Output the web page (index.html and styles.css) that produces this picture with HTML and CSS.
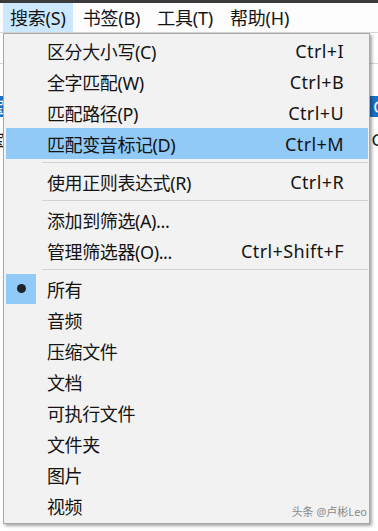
FILE: index.html
```html
<!DOCTYPE html>
<html lang="zh-CN">
<head>
    <meta charset="UTF-8">
    <title>搜索菜单</title>
    <link rel="stylesheet" href="styles.css">
</head>
<body>
    <div class="window">
        <div class="titlebar"></div>

        <nav class="menubar">
            <span class="menubar-item active">搜索(S)</span>
            <span class="menubar-item">书签(B)</span>
            <span class="menubar-item">工具(T)</span>
            <span class="menubar-item">帮助(H)</span>
        </nav>

        <!-- window content behind the open menu -->
        <div class="content">
            <div class="toolbar"></div>
            <div class="list-head"></div>
            <div class="list-row selected"><span class="cell-left">宝</span><span class="cell-right">C</span></div>
            <div class="list-row"><span class="cell-left">宝</span><span class="cell-right">G</span></div>
        </div>

        <div class="dropdown">
            <div class="menu-item"><span class="icon"></span><span class="label">区分大小写(C)</span><span class="key">Ctrl+I</span></div>
            <div class="menu-item"><span class="icon"></span><span class="label">全字匹配(W)</span><span class="key">Ctrl+B</span></div>
            <div class="menu-item"><span class="icon"></span><span class="label">匹配路径(P)</span><span class="key">Ctrl+U</span></div>
            <div class="menu-item hover"><span class="icon"></span><span class="label">匹配变音标记(D)</span><span class="key">Ctrl+M</span></div>
            <div class="separator"></div>
            <div class="menu-item"><span class="icon"></span><span class="label">使用正则表达式(R)</span><span class="key">Ctrl+R</span></div>
            <div class="separator"></div>
            <div class="menu-item"><span class="icon"></span><span class="label">添加到筛选(A)...</span><span class="key"></span></div>
            <div class="menu-item"><span class="icon"></span><span class="label">管理筛选器(O)...</span><span class="key">Ctrl+Shift+F</span></div>
            <div class="separator"></div>
            <div class="menu-item checked"><span class="icon"><span class="dot"></span></span><span class="label">所有</span><span class="key"></span></div>
            <div class="menu-item"><span class="icon"></span><span class="label">音频</span><span class="key"></span></div>
            <div class="menu-item"><span class="icon"></span><span class="label">压缩文件</span><span class="key"></span></div>
            <div class="menu-item"><span class="icon"></span><span class="label">文档</span><span class="key"></span></div>
            <div class="menu-item"><span class="icon"></span><span class="label">可执行文件</span><span class="key"></span></div>
            <div class="menu-item"><span class="icon"></span><span class="label">文件夹</span><span class="key"></span></div>
            <div class="menu-item"><span class="icon"></span><span class="label">图片</span><span class="key"></span></div>
            <div class="menu-item"><span class="icon"></span><span class="label">视频</span><span class="key"></span></div>

            <div class="watermark">头条 @卢彬Leo</div>
        </div>
    </div>
</body>
</html>
```

FILE: styles.css
```css
:root {
    --menu-bg: #f2f2f2;
    --menu-border: #a8a8a8;
    --hover: #91c9f7;
    --bar-hover: #cce8ff;
    --text: #141414;
    --line: #d7d7d7;
}

* {
    box-sizing: border-box;
    margin: 0;
    padding: 0;
}

body {
    width: 378px;
    height: 531px;
    overflow: hidden;
    background: #fff;
    font-family: "Noto Sans", "Noto Sans CJK SC", sans-serif;
    color: var(--text);
}

.window {
    position: relative;
    height: 100%;
}

.titlebar {
    height: 3px;
    background: #3b3b3b;
}

.menubar {
    display: flex;
    height: 30px;
    padding-left: 3px;
    background: #fdfdfd;
    border-bottom: 1px solid var(--line);
    font-size: 18px;
}

.menubar-item {
    display: flex;
    align-items: center;
    padding: 0 7px;
    margin-right: 3px;
    line-height: 30px;
    letter-spacing: -0.2px;
}

.menubar-item.active {
    background: var(--bar-hover);
}

/* background window content */
.content {
    font-size: 17px;
}

.toolbar {
    height: 31px;
    border-bottom: 1px solid var(--line);
}

.list-head {
    height: 32px;
}

.list-row {
    display: flex;
    justify-content: space-between;
    height: 21px;
    line-height: 21px;
    margin-bottom: 12px;
}

.list-row.selected {
    background: #1d6fc4;
    color: #fff;
}

.cell-left {
    margin-left: -12px;
}

.cell-right {
    margin-right: -6px;
}

/* the open dropdown menu */
.dropdown {
    position: absolute;
    top: 33px;
    left: 3px;
    width: 367px;
    height: 491px;
    padding: 1px 1px 0 1px;
    background: var(--menu-bg);
    border: 1px solid var(--menu-border);
    box-shadow: 2px 2px 3px rgba(0, 0, 0, 0.35);
    font-size: 18px;
}

.menu-item {
    display: flex;
    align-items: center;
    height: 31px;
    margin-left: 1px;
    padding-right: 24px;
    white-space: nowrap;
}

.menu-item.hover {
    background: var(--hover);
}

.icon {
    flex: none;
    width: 30px;
    height: 30px;
    margin-right: 11px;
    display: flex;
    align-items: center;
    justify-content: center;
}

.menu-item.checked .icon {
    background: var(--hover);
}

.dot {
    width: 9px;
    height: 9px;
    border-radius: 50%;
    background: #1e2328;
}

.label {
    flex: 1;
    letter-spacing: -0.4px;
}

.key {
    letter-spacing: 0.4px;
}

.separator {
    height: 7px;
    margin-left: 37px;
    display: flex;
    align-items: center;
}

.separator::after {
    content: '';
    display: block;
    width: 100%;
    height: 1px;
    background: #d2d2d2;
}

.watermark {
    position: absolute;
    right: 2px;
    bottom: 4px;
    font-size: 11px;
    color: #8a8a8a;
}
```
